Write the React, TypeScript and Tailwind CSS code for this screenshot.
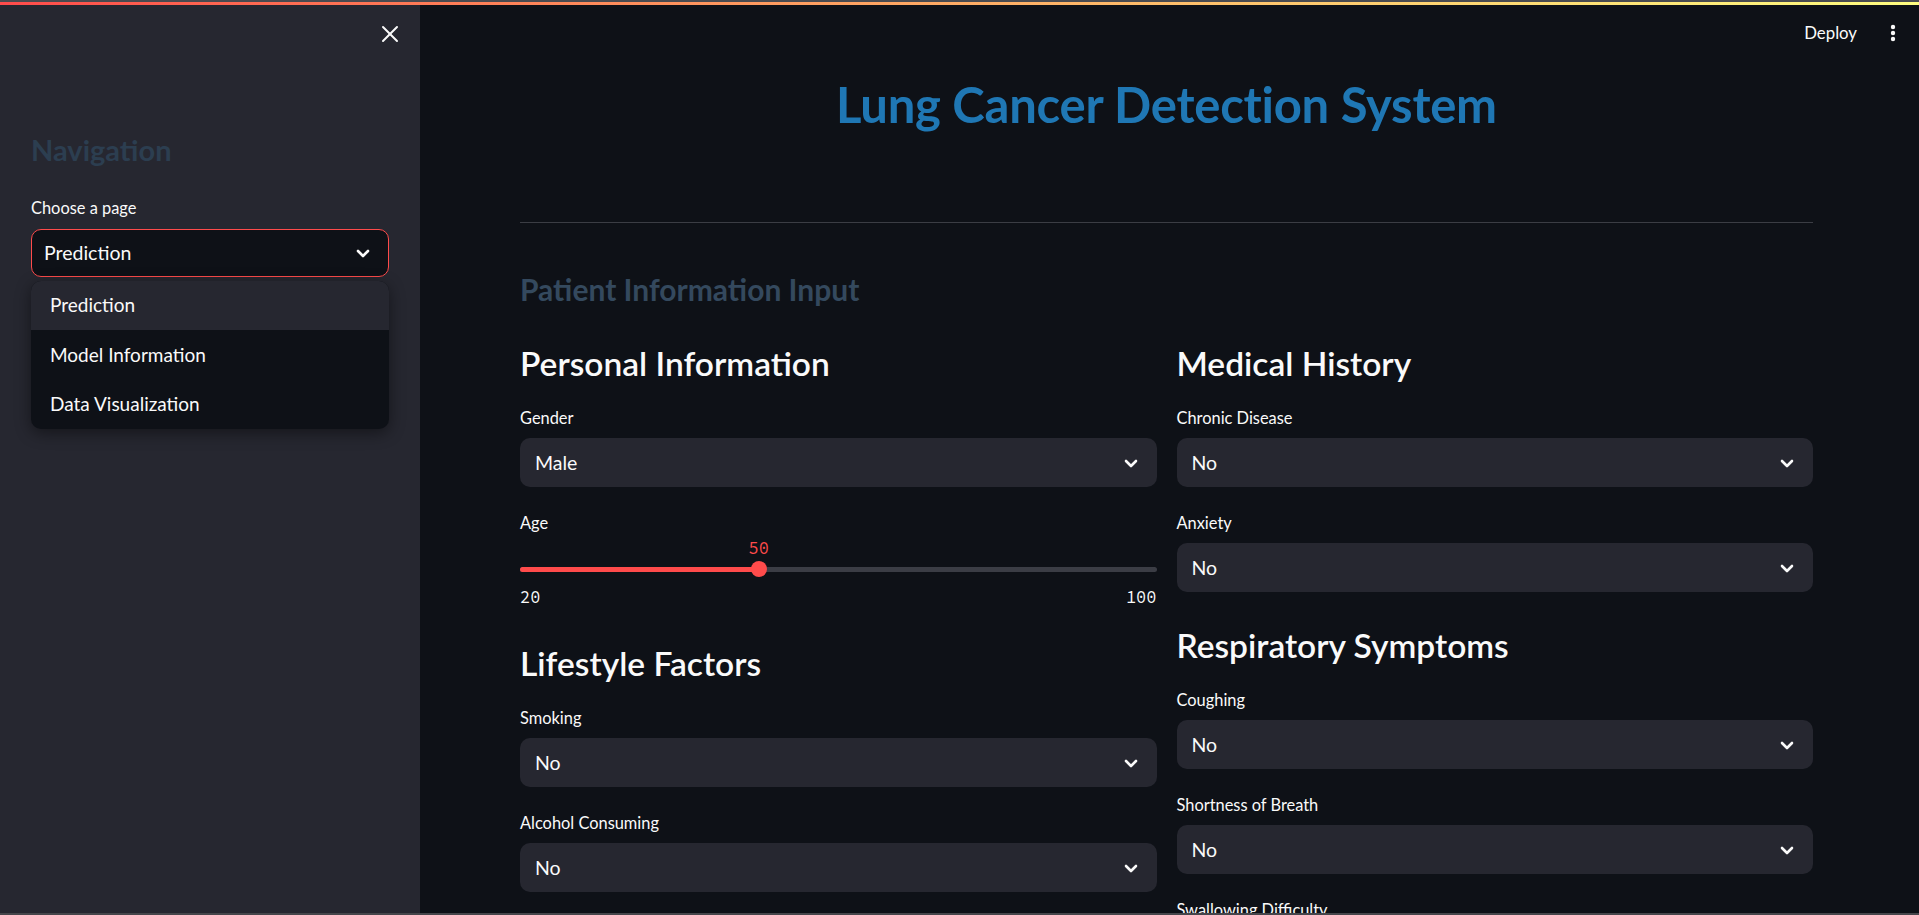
import { X } from 'lucide-react';

const sans = "font-['Source_Sans_Pro',Lato,'Noto_Sans',sans-serif]";
const mono = "font-['Source_Code_Pro','DejaVu_Sans_Mono',monospace]";

function Chevron() {
    return (
        <svg width="24" height="24" viewBox="0 0 24 24" fill="none" stroke="#fafafa" strokeWidth="2.6" strokeLinecap="round" strokeLinejoin="round">
            <polyline points="7 10 12 15 17 10" />
        </svg>
    );
}

function SelectBox({ value }: { value: string }) {
    return (
        <div className="mt-[9px] h-[49px] shrink-0 rounded-[10px] bg-[#262730] flex items-center justify-between pl-[15px] pr-[14px]">
            <span className="text-[19.5px] text-[#fafafa]">{value}</span>
            <Chevron />
        </div>
    );
}

function Label({ text, first }: { text: string; first?: boolean }) {
    return (
        <div className={`${first ? 'mt-[23px]' : 'mt-[25px]'} h-[22px] shrink-0 leading-[22px] text-[16.4px] text-[#fafafa]`}>
            {text}
        </div>
    );
}

function Field({ label, value, first }: { label: string; value: string; first?: boolean }) {
    return (
        <>
            <Label text={label} first={first} />
            <SelectBox value={value} />
        </>
    );
}

function SectionTitle({ text, className = '' }: { text: string; className?: string }) {
    return (
        <h3 className={`h-[42px] shrink-0 leading-[42px] text-[33.5px] font-semibold text-[#fafafa] ${className}`}>
            {text}
        </h3>
    );
}

function AgeSlider() {
    const min = 20;
    const max = 100;
    const value = 50;
    const pct = ((value - min) / (max - min)) * 100;
    return (
        <div className="shrink-0">
            <div className="mt-[4px] h-[20px] relative">
                <span
                    className={`absolute -translate-x-1/2 ${mono} text-[17px] leading-[20px] text-[#ff4b4b]`}
                    style={{ left: `${pct}%` }}
                >
                    {value}
                </span>
            </div>
            <div className="mt-[3px] h-[16px] relative flex items-center">
                <div className="w-full h-[5px] rounded-full bg-[#3b3d45] overflow-hidden">
                    <div className="h-full bg-[#ff4b4b]" style={{ width: `${pct}%` }} />
                </div>
                <div
                    className="absolute w-[16px] h-[16px] -translate-x-1/2 rounded-full bg-[#ff4b4b]"
                    style={{ left: `${pct}%` }}
                />
            </div>
            <div className={`mt-[10px] h-[20px] flex justify-between ${mono} text-[17px] leading-[20px] text-[#fafafa]`}>
                <span>{min}</span>
                <span>{max}</span>
            </div>
        </div>
    );
}

export default function App() {
    return (
        <div className={`h-[915px] w-full flex flex-col bg-[#0e1117] overflow-hidden ${sans}`}>
            {/* window edge + streamlit decoration */}
            <div className="h-[2px] shrink-0 bg-[#4a4b50]" />
            <div className="h-[3px] shrink-0 bg-gradient-to-r from-[#ff4b4b] to-[#fffd80]" />

            <div className="flex-1 min-h-0 flex">
                {/* Sidebar */}
                <aside className="w-[420px] shrink-0 bg-[#262730] px-[31px]">
                    <div className="h-[58px] flex items-center justify-end -mr-[15px]">
                        <X size={28} strokeWidth={1.7} color="#fafafa" />
                    </div>
                    <h2 className="mt-[70px] h-[34px] leading-[34px] text-[29px] font-bold text-[#2c3e50]">Navigation</h2>
                    <div className="mt-[30px] h-[22px] leading-[22px] text-[16.4px] text-[#fafafa]">Choose a page</div>
                    <div className="relative mt-[10px]">
                        <div className="h-[48px] rounded-[10px] border border-[#ff4b4b] bg-[#0e1117] flex items-center justify-between pl-[12px] pr-[13px]">
                            <span className="text-[19.5px] text-[#fafafa]">Prediction</span>
                            <Chevron />
                        </div>
                        <ul className="absolute left-0 right-0 top-full mt-[4px] rounded-[10px] bg-[#0e1117] overflow-hidden shadow-[0_4px_16px_rgba(0,0,0,0.45)] text-[19px] text-[#fafafa]">
                            <li className="h-[49px] flex items-center pl-[19px] bg-[#262730]">Prediction</li>
                            <li className="h-[50px] flex items-center pl-[19px]">Model Information</li>
                            <li className="h-[49px] flex items-center pl-[19px]">Data Visualization</li>
                        </ul>
                    </div>
                </aside>

                {/* Main */}
                <main className="flex-1 min-w-0 overflow-hidden">
                    <div className="h-[56px] flex items-center justify-end pr-[23px] gap-[33px] text-[16.8px] text-[#fafafa]">
                        <span>Deploy</span>
                        <svg width="6" height="18" viewBox="0 0 6 18" fill="#fafafa">
                            <circle cx="3" cy="3" r="2.2" />
                            <circle cx="3" cy="9" r="2.2" />
                            <circle cx="3" cy="15" r="2.2" />
                        </svg>
                    </div>

                    <div className="pl-[100px] pr-[106px]">
                        <h1 className="mt-[10px] h-[66px] leading-[66px] text-center text-[49px] font-bold tracking-[-0.005em] text-[#1f77b4]">
                            Lung Cancer Detection System
                        </h1>
                        <hr className="mt-[85px] border-0 h-px bg-[#3b3d44]" />
                        <h2 className="mt-[48px] h-[36px] leading-[36px] text-[30px] font-bold text-[#34495e]">
                            Patient Information Input
                        </h2>

                        <div className="mt-[35px] grid grid-cols-2 gap-[20px]">
                            <div className="flex flex-col">
                                <SectionTitle text="Personal Information" />
                                <Field label="Gender" value="Male" first />
                                <Label text="Age" />
                                <AgeSlider />
                                <SectionTitle text="Lifestyle Factors" className="mt-[35px]" />
                                <Field label="Smoking" value="No" first />
                                <Field label="Alcohol Consuming" value="No" />
                            </div>
                            <div className="flex flex-col">
                                <SectionTitle text="Medical History" />
                                <Field label="Chronic Disease" value="No" first />
                                <Field label="Anxiety" value="No" />
                                <SectionTitle text="Respiratory Symptoms" className="mt-[32px]" />
                                <Field label="Coughing" value="No" first />
                                <Field label="Shortness of Breath" value="No" />
                                <Field label="Swallowing Difficulty" value="No" />
                            </div>
                        </div>
                    </div>
                </main>
            </div>

            <div className="h-[2px] shrink-0 bg-[#45464b]" />
        </div>
    );
}
